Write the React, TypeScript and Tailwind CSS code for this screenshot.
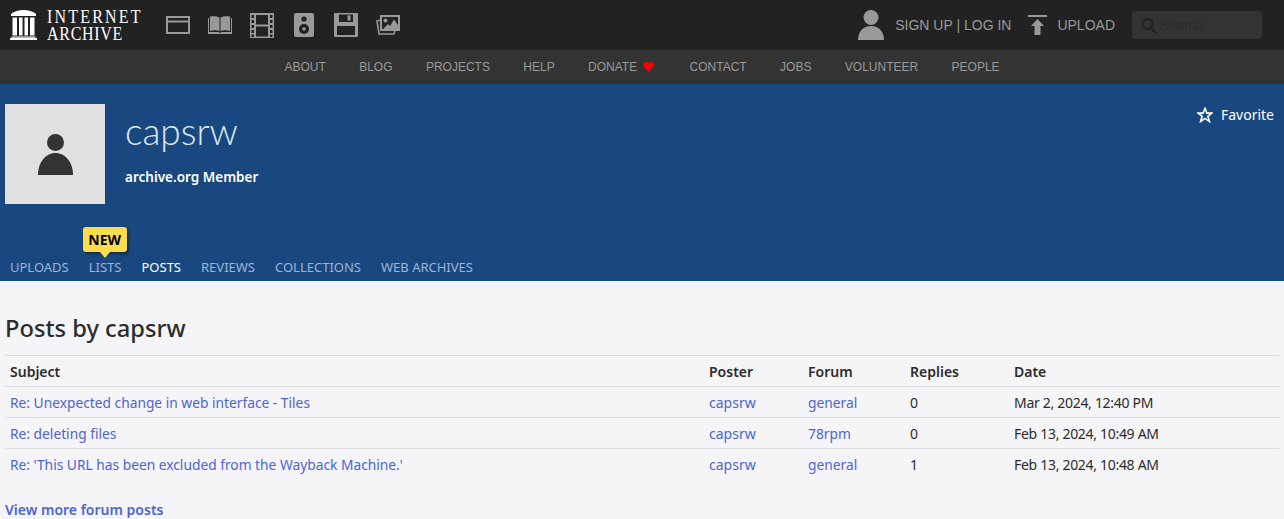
const navLinks = ['ABOUT', 'BLOG', 'PROJECTS', 'HELP', 'DONATE', 'CONTACT', 'JOBS', 'VOLUNTEER', 'PEOPLE'];
const tabs = ['UPLOADS', 'LISTS', 'POSTS', 'REVIEWS', 'COLLECTIONS', 'WEB ARCHIVES'];
const posts = [
  { subject: 'Re: Unexpected change in web interface - Tiles', forum: 'general', replies: 0, date: 'Mar 2, 2024, 12:40 PM' },
  { subject: 'Re: deleting files', forum: '78rpm', replies: 0, date: 'Feb 13, 2024, 10:49 AM' },
  { subject: "Re: 'This URL has been excluded from the Wayback Machine.'", forum: 'general', replies: 1, date: 'Feb 13, 2024, 10:48 AM' },
];

const Temple = () => (
  <svg width="27" height="30" viewBox="0 0 27 30" fill="#fff">
    <path d="M13.5 0 C18 0 23 1.5 26 4 V6 H1 V4 C4 1.5 9 0 13.5 0 Z" />
    <rect x="2.5" y="7.5" width="4.5" height="18" />
    <rect x="9" y="7.5" width="3.5" height="18" />
    <rect x="14.5" y="7.5" width="3.5" height="18" />
    <rect x="20" y="7.5" width="4.5" height="18" />
    <rect x="1.5" y="26.5" width="24" height="1.2" />
    <rect x="0" y="28" width="27" height="2" />
  </svg>
);

const WebIcon = () => (
  <svg width="24" height="18" viewBox="0 0 24 18" fill="none" stroke="#999">
    <rect x="1" y="1" width="22" height="16" strokeWidth="2" />
    <path d="M1 5.5 H23" strokeWidth="2" />
    <path d="M15 3h2M19 3h2" strokeWidth="1.5" stroke="#222" />
  </svg>
);

const BookIcon = () => (
  <svg width="24" height="18" viewBox="0 0 24 18" fill="#999">
    <path d="M2 0.5 C5 0 9 0 11.5 1.5 V15 C9 14 5 14 2 15 Z" />
    <path d="M22 0.5 C19 0 15 0 12.5 1.5 V15 C15 14 19 14 22 15 Z" />
    <path d="M0 2 H1 V16 H10.5 L12 17 L13.5 16 H23 V2 H24 V18 H0 Z" />
  </svg>
);

const FilmIcon = () => (
  <svg width="24" height="25" viewBox="0 0 24 25" fill="#999">
    <path fillRule="evenodd" d="M0 0 H24 V25 H0 Z M1.5 2 V5 H4 V2 Z M1.5 7 V10 H4 V7 Z M1.5 12 V15 H4 V12 Z M1.5 17 V20 H4 V17 Z M1.5 21.5 V24 H4 V21.5 Z M20 2 V5 H22.5 V2 Z M20 7 V10 H22.5 V7 Z M20 12 V15 H22.5 V12 Z M20 17 V20 H22.5 V17 Z M20 21.5 V24 H22.5 V21.5 Z M6 2 V11.5 H18 V2 Z M6 13.5 V23.5 H18 V13.5 Z" />
  </svg>
);

const SpeakerIcon = () => (
  <svg className="mx-[2px]" width="20" height="24" viewBox="0 0 20 24">
    <rect width="20" height="24" rx="2" fill="#999" />
    <circle cx="10" cy="6" r="2.6" fill="#222" />
    <circle cx="10" cy="16" r="5" fill="#222" />
    <circle cx="10" cy="16" r="1.8" fill="#999" />
  </svg>
);

const SaveIcon = () => (
  <svg width="24" height="24" viewBox="0 0 24 24" fill="#999">
    <path fillRule="evenodd" d="M1 0 H23 A1 1 0 0 1 24 1 V23 A1 1 0 0 1 23 24 H1 A1 1 0 0 1 0 23 V1 A1 1 0 0 1 1 0 Z M5 1.5 V9 H19 V1.5 Z M13.5 2.5 H16.5 V7.5 H13.5 Z M3 13 V22 H21 V13 Z" />
  </svg>
);

const ImageIcon = () => (
  <svg width="24" height="20" viewBox="0 0 24 20" fill="none">
    <path d="M4.5 5 L1 6 L3 19 L18 19 L19 15.5" stroke="#999" strokeWidth="1.6" />
    <rect x="5" y="1" width="18" height="14" stroke="#999" strokeWidth="2" />
    <circle cx="9.5" cy="5.5" r="2" fill="#999" />
    <path d="M7 14 L12 9 L14 11 L18 4.5 L22 10 V14 Z" fill="#999" />
  </svg>
);

const App = () => {
  return (
    <div className="h-[519px] overflow-hidden bg-[#f5f5f7] text-[#2c2c2c] font-['Noto_Sans',sans-serif]">
      {/* top bar */}
      <div className="flex h-[50px] items-center bg-[#222] pl-[10px]">
        <Temple />
        <div className="ml-[10px] flex w-[96px] origin-center scale-y-[1.15] flex-col whitespace-nowrap font-['Liberation_Serif',serif] text-[16px] leading-[15px] text-white">
          <span className="tracking-[2.2px]">INTERNET</span>
          <span className="tracking-[0.7px]">ARCHIVE</span>
        </div>
        <div className="ml-[23px] flex items-center gap-[18px]">
          <WebIcon />
          <BookIcon />
          <FilmIcon />
          <SpeakerIcon />
          <SaveIcon />
          <ImageIcon />
        </div>
        <div className="ml-auto flex items-center pr-[22px] font-['Liberation_Sans',sans-serif] text-sm text-[#999]">
          <svg width="26" height="30" viewBox="0 0 26 30" fill="#999">
            <circle cx="13" cy="7.5" r="7.5" />
            <path d="M0 30 C0 22 5 16 13 16 C21 16 26 22 26 30 Z" />
          </svg>
          <span className="ml-[11px]">SIGN UP | LOG IN</span>
          <svg className="ml-[17px]" width="19" height="20" viewBox="0 0 19 20" fill="#999">
            <rect width="19" height="2" />
            <path d="M9.5 4 L16 11 H12.5 V20 H6.5 V11 H3 Z" />
          </svg>
          <span className="ml-[10px]">UPLOAD</span>
          <div className="ml-[17px] flex h-[28px] w-[130px] items-center rounded-[4px] bg-[#333] pl-[8px]">
            <svg width="18" height="18" viewBox="0 0 18 18" fill="none" stroke="#222" strokeWidth="2.4">
              <circle cx="7.5" cy="8" r="5" />
              <path d="M11 12 L16 17" />
            </svg>
            <span className="ml-[1px] text-sm text-[#2b2b2b]">Search</span>
          </div>
        </div>
      </div>

      {/* secondary nav */}
      <div className="flex h-[34px] items-center justify-center gap-[33.4px] bg-[#333] font-['Liberation_Sans',sans-serif] text-xs text-[#999]">
        {navLinks.map((link) => (
          <span key={link} className="flex items-center">
            {link}
            {link === 'DONATE' && (
              <svg className="ml-[6px] mr-[2px]" width="11" height="10" viewBox="0 0 24 22" fill="#f00">
                <path d="M12 22 L2 11 C-2 5 3 0 7 0 C9 0 11 1 12 3 C13 1 15 0 17 0 C21 0 26 5 22 11 Z" />
              </svg>
            )}
          </span>
        ))}
      </div>

      {/* profile header */}
      <div className="flex h-[197px] flex-col bg-[#194880] pl-[5px] pt-[20px]">
        <div className="flex h-[100px] items-start">
          <div className="flex h-[100px] w-[100px] shrink-0 items-center justify-center bg-[#e0e0e0]">
            <svg width="35" height="41" viewBox="0 0 35 41" fill="#333">
              <circle cx="17.5" cy="8.5" r="8.5" />
              <path d="M0 41 C0 28 8 19 17.5 19 C27 19 35 28 35 41 Z" />
            </svg>
          </div>
          <div className="ml-[20px] text-white">
            <h1 className="mt-[2px] font-['Lato',sans-serif] text-[37px] font-light leading-[50px] text-[#dfe9f5]">capsrw</h1>
            <p className="mt-[11px] text-[13.5px] font-semibold leading-[20px]">archive.org Member</p>
          </div>
          <div className="ml-auto mr-[10px] mt-[1px] flex items-center gap-[8px] text-sm leading-[20px] text-white">
            <svg width="16" height="16" viewBox="0 0 24 24" fill="none" stroke="#fff" strokeWidth="2.4">
              <path d="M12 2 L14.8 9.2 H22.5 L16.3 14 L18.6 21.8 L12 17.2 L5.4 21.8 L7.7 14 L1.5 9.2 H9.2 Z" />
            </svg>
            Favorite
          </div>
        </div>
        <div className="mt-auto flex gap-[20px] pb-[5px] pl-[5px] text-[13px] leading-[18px] text-[#9db4d2]">
          {tabs.map((tab) => (
            <div key={tab} className={`relative ${tab === 'POSTS' ? 'text-white' : ''}`}>
              {tab}
              {tab === 'LISTS' && (
                <div className="absolute bottom-[24px] left-[-6px] w-[44px] rounded-[3px] bg-[#fedc4b] text-center text-sm font-bold leading-[25px] text-black shadow-[2px_2px_3px_rgba(0,0,0,0.4)]">
                  NEW
                  <div className="absolute bottom-[-6px] left-[17px] h-0 w-0 border-x-[5px] border-t-[6px] border-x-transparent border-t-[#fedc4b]" />
                </div>
              )}
            </div>
          ))}
        </div>
      </div>

      {/* posts */}
      <div className="px-[5px]">
        <h2 className="mt-[32px] text-[23.7px] font-medium leading-[30px]">Posts by capsrw</h2>
        <table className="mt-[12px] w-full table-fixed border-t border-[#ddd] text-sm">
          <thead>
            <tr className="h-[31px] border-b border-[#ddd] text-left">
              <th className="w-[699px] pl-[5px] pt-[2px] font-semibold">Subject</th>
              <th className="w-[99px] pl-[5px] pt-[2px] font-semibold">Poster</th>
              <th className="w-[102px] pl-[5px] pt-[2px] font-semibold">Forum</th>
              <th className="w-[104px] pl-[5px] pt-[2px] font-semibold">Replies</th>
              <th className="pl-[5px] pt-[2px] font-semibold">Date</th>
            </tr>
          </thead>
          <tbody>
            {posts.map((post) => (
              <tr key={post.subject} className="h-[31px] border-b border-[#ddd] last:border-b-0">
                <td className="pl-[5px] pt-[2px] text-[13.77px] text-[#4b64d8]">{post.subject}</td>
                <td className="pl-[5px] pt-[2px] text-[#4b64d8]">capsrw</td>
                <td className="pl-[5px] pt-[2px] text-[13.8px] text-[#4b64d8]">{post.forum}</td>
                <td className="pl-[5px] pt-[2px]">{post.replies}</td>
                <td className="pl-[5px] pt-[2px] tracking-[-0.3px]">{post.date}</td>
              </tr>
            ))}
          </tbody>
        </table>
        <div className="mt-[20px] text-sm font-semibold leading-[20px] text-[#4b64d8]">View more forum posts</div>
      </div>
    </div>
  );
};

export default App;
